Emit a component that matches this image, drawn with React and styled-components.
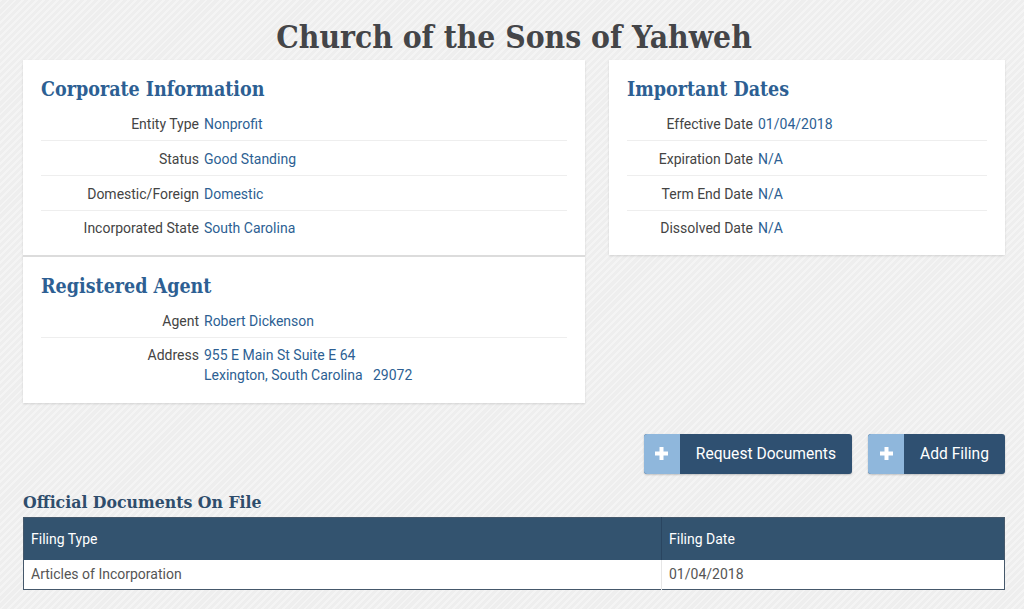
import styled, { createGlobalStyle } from 'styled-components';

const GlobalStyle = createGlobalStyle`
    html, body {
        margin: 0;
        padding: 0;
    }
    body {
        font-family: Roboto, "Liberation Sans", sans-serif;
        background-color: #f1f1f1;
        background-image: repeating-linear-gradient(135deg, #f4f4f4 0 2px, #eeeeee 2px 5px);
        min-height: 609px;
    }
`;

const Page = styled.div`
    padding: 0 19px 20px 23px;
`;

const Title = styled.h1`
    margin: 0;
    height: 60px;
    line-height: 74px;
    text-align: center;
    font-family: "DejaVu Serif Condensed", "DejaVu Serif", serif;
    font-size: 31.5px;
    font-weight: bold;
    color: #444548;
`;

const Grid = styled.div`
    display: grid;
    grid-template-columns: 562px 396px;
    gap: 24px;
    align-items: start;
`;

const Card = styled.div`
    background: #fff;
    box-shadow: 0 1px 2px rgba(0, 0, 0, 0.12);
`;

const Section = styled.div`
    padding: 17px 18px 10px 18px;
    & + & {
        border-top: 2px solid #dcdcdc;
        padding-bottom: 11px;
    }
`;

const Heading = styled.h2`
    margin: 0 0 4px 0;
    font-family: "DejaVu Serif Condensed", "DejaVu Serif", serif;
    font-size: 19.5px;
    line-height: 26px;
    font-weight: bold;
    color: #2d5f93;
`;

const Row = styled.div`
    display: grid;
    grid-template-columns: ${(p) => p.$label}px 1fr;
    column-gap: 5px;
    padding: 7px 0 6.3px 0;
    font-size: 14px;
    line-height: 20px;
    & + & {
        border-top: 1px solid #eeeeee;
        padding-top: 7.5px;
    }
`;

const Label = styled.div`
    text-align: right;
    color: #444;
`;

const Value = styled.div`
    color: #2d5f93;
    white-space: pre;
`;

const Actions = styled.div`
    display: flex;
    justify-content: flex-end;
    gap: 16px;
    margin-top: 31px;
`;

const Button = styled.button`
    display: flex;
    align-items: stretch;
    height: 40px;
    padding: 0;
    border: none;
    border-radius: 3px;
    overflow: hidden;
    background: #2f5071;
    color: #fff;
    font-family: Roboto, "Liberation Sans", sans-serif;
    font-size: 15.6px;
    box-shadow: 0 1px 2px rgba(0, 0, 0, 0.2);
    cursor: pointer;
`;

const ButtonIcon = styled.span`
    width: 36px;
    display: flex;
    align-items: center;
    justify-content: center;
    background: #8fb7dc;
`;

const ButtonText = styled.span`
    display: flex;
    align-items: center;
    padding: 0 16px;
`;

const DocsHeading = styled.h3`
    margin: 16px 0 3px 0;
    font-family: "DejaVu Serif Condensed", "DejaVu Serif", serif;
    font-size: 17.5px;
    line-height: 24px;
    font-weight: bold;
    color: #2f4d6c;
`;

const Table = styled.table`
    width: 100%;
    border-collapse: collapse;
    border: 1px solid #45586b;
    font-size: 14px;
    background: #fff;
`;

const Th = styled.th`
    background: #33536f;
    color: #fff;
    font-weight: normal;
    text-align: left;
    height: 42px;
    padding: 0 7px;
    width: ${(p) => p.$w || 'auto'};
    & + & {
        border-left: 1px solid #2a4560;
    }
`;

const Td = styled.td`
    color: #555;
    height: 29px;
    padding: 0 7px;
    & + & {
        border-left: 1px solid #e6e6e6;
    }
`;

const Plus = () => (
    <svg width="13" height="13" viewBox="0 0 13 13">
        <rect x="4.5" y="0" width="4" height="13" fill="#fff" />
        <rect x="0" y="4.5" width="13" height="4" fill="#fff" />
    </svg>
);

const corporate = [
    ['Entity Type', 'Nonprofit'],
    ['Status', 'Good Standing'],
    ['Domestic/Foreign', 'Domestic'],
    ['Incorporated State', 'South Carolina'],
];

const dates = [
    ['Effective Date', '01/04/2018'],
    ['Expiration Date', 'N/A'],
    ['Term End Date', 'N/A'],
    ['Dissolved Date', 'N/A'],
];

const agent = [
    ['Agent', 'Robert Dickenson'],
    ['Address', '955 E Main St Suite E 64\nLexington, South Carolina   29072'],
];

const App = () => {
    return (
        <Page>
            <GlobalStyle />
            <Title>Church of the Sons of Yahweh</Title>
            <Grid>
                <Card>
                    <Section>
                        <Heading>Corporate Information</Heading>
                        {corporate.map(([l, v]) => (
                            <Row key={l} $label={158}>
                                <Label>{l}</Label>
                                <Value>{v}</Value>
                            </Row>
                        ))}
                    </Section>
                    <Section>
                        <Heading>Registered Agent</Heading>
                        {agent.map(([l, v]) => (
                            <Row key={l} $label={158}>
                                <Label>{l}</Label>
                                <Value>{v}</Value>
                            </Row>
                        ))}
                    </Section>
                </Card>
                <Card>
                    <Section>
                        <Heading>Important Dates</Heading>
                        {dates.map(([l, v]) => (
                            <Row key={l} $label={126}>
                                <Label>{l}</Label>
                                <Value>{v}</Value>
                            </Row>
                        ))}
                    </Section>
                </Card>
            </Grid>
            <Actions>
                <Button>
                    <ButtonIcon><Plus /></ButtonIcon>
                    <ButtonText>Request Documents</ButtonText>
                </Button>
                <Button>
                    <ButtonIcon><Plus /></ButtonIcon>
                    <ButtonText>Add Filing</ButtonText>
                </Button>
            </Actions>
            <DocsHeading>Official Documents On File</DocsHeading>
            <Table>
                <thead>
                    <tr>
                        <Th $w="623px">Filing Type</Th>
                        <Th>Filing Date</Th>
                    </tr>
                </thead>
                <tbody>
                    <tr>
                        <Td>Articles of Incorporation</Td>
                        <Td>01/04/2018</Td>
                    </tr>
                </tbody>
            </Table>
        </Page>
    );
};

export default App;
